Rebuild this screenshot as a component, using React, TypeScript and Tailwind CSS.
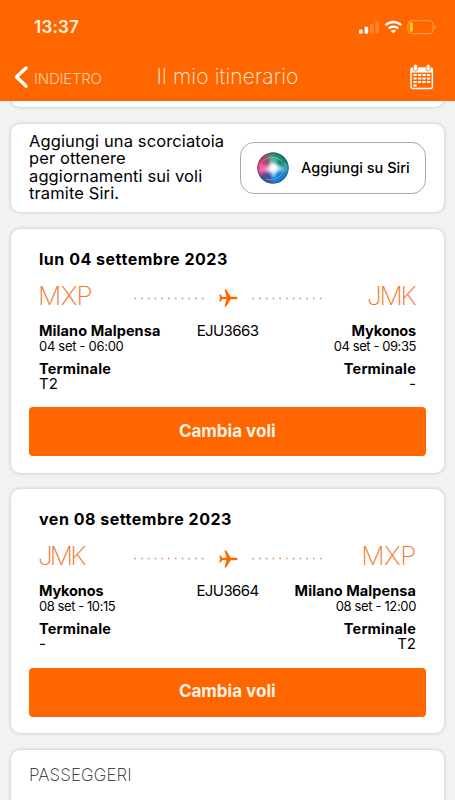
import React from "react";

type Stop = { code: string; codeClass: string; city: string; cityClass: string; time: string; timeClass: string; terminal: string };
type Flight = { date: string; number: string; from: Stop; to: Stop };

const flights: Flight[] = [
  {
    date: "lun 04 settembre 2023",
    number: "EJU3663",
    from: { code: "MXP", codeClass: "tracking-[-0.7px]", city: "Milano Malpensa", cityClass: "tracking-[0.07px]", time: "04 set - 06:00", timeClass: "tracking-[-0.3px]", terminal: "T2" },
    to: { code: "JMK", codeClass: "tracking-[-2.2px] pr-[1.5px]", city: "Mykonos", cityClass: "tracking-[-0.15px]", time: "04 set - 09:35", timeClass: "tracking-[-0.43px]", terminal: "-" },
  },
  {
    date: "ven 08 settembre 2023",
    number: "EJU3664",
    from: { code: "JMK", codeClass: "tracking-[-2.9px]", city: "Mykonos", cityClass: "tracking-[-0.15px]", time: "08 set - 10:15", timeClass: "tracking-[-0.43px]", terminal: "-" },
    to: { code: "MXP", codeClass: "tracking-[-0.4px]", city: "Milano Malpensa", cityClass: "tracking-[0.07px]", time: "08 set - 12:00", timeClass: "tracking-[-0.36px]", terminal: "T2" },
  },
];

function StatusIcons() {
  return (
    <svg width="80" height="18" viewBox="358 18 80 18" fill="none" aria-hidden="true">
      <rect x="359" y="29.5" width="3.6" height="4.3" rx="1" fill="#fff" />
      <rect x="364.6" y="26.8" width="3.6" height="7" rx="1" fill="#fff" />
      <rect x="370" y="24" width="3.6" height="9.8" rx="1" fill="#fff" opacity=".2" />
      <rect x="375.4" y="21.2" width="3.6" height="12.6" rx="1" fill="#fff" opacity=".2" />
      <g stroke="#fff" strokeWidth="2.3">
        <path d="M385.6 25.3c4.3-4.4 11.3-4.4 15.6 0" />
        <path d="M388.6 28.5c2.7-2.6 6.9-2.6 9.6 0" />
      </g>
      <path d="M390.7 30.7c1.6-1.4 3.8-1.4 5.4 0l-2.7 2.9z" fill="#fff" />
      <rect x="408" y="20.7" width="25" height="13" rx="3.4" stroke="#ffb27a" strokeOpacity=".75" />
      <rect x="409.8" y="22.6" width="3" height="9.2" rx="1.2" fill="#ffd60a" />
      <path d="M434.6 25v4.6c1.6-.8 1.6-3.8 0-4.6z" fill="#ffb27a" opacity=".8" />
    </svg>
  );
}

function CalendarIcon() {
  const cells = [
    [0, 0], [1, 0], [2, 0], [3, 0],
    [0, 1], [1, 1], [2, 1], [3, 1],
    [0, 2], [1, 2], [2, 2], [3, 2],
    [0, 3],
  ];
  return (
    <svg width="24" height="26" viewBox="0 0 24 26" fill="none" aria-hidden="true">
      <rect x="1" y="4" width="21.4" height="20.4" rx="2" stroke="#fff" strokeWidth="1.5" />
      <path d="M1 4h21.4v4.6H1z" fill="#fff" />
      <rect x="3.6" y="0.2" width="4" height="6.8" rx="2" fill="#fff" stroke="#ff6600" strokeWidth=".8" />
      <rect x="16.2" y="0.2" width="4" height="6.8" rx="2" fill="#fff" stroke="#ff6600" strokeWidth=".8" />
      {cells.map(([c, r]) => (
        <rect key={`${c}-${r}`} x={3.4 + c * 4.5} y={10 + r * 3.5} width="3.3" height="2" fill="#fff" />
      ))}
    </svg>
  );
}

function SiriOrb() {
  return (
    <svg width="32" height="32" viewBox="0 0 32 32" aria-hidden="true">
      <defs>
        <clipPath id="orb"><circle cx="16" cy="16" r="15.6" /></clipPath>
        <filter id="soft" x="-50%" y="-50%" width="200%" height="200%"><feGaussianBlur stdDeviation="1.8" /></filter>
        <filter id="glow" x="-50%" y="-50%" width="200%" height="200%"><feGaussianBlur stdDeviation="1.5" /></filter>
      </defs>
      <g clipPath="url(#orb)">
        <rect width="32" height="32" fill="#2c5a8a" />
        <g filter="url(#soft)">
          <path d="M16 16 8-2h26v16z" fill="#14876a" />
          <path d="M16 16 34 11v14z" fill="#3a9fb4" />
          <path d="M16 16 34 22 24 34 8 34z" fill="#127fd0" />
          <path d="M16 16 14 34 2 34 0 24z" fill="#45509e" />
          <path d="M16 16-2 25V6L9-2z" fill="#cc2a70" />
          <path d="M16 16 5 8 11 1l5 2z" fill="#7c5f6c" />
          <path d="M18 17 1 10v12z" fill="#f5609f" />
          <path d="M16 16 22 6 12 4z" fill="#4db698" />
        </g>
        <path d="M4 11C12 2 24 5 29 14M9 27c8 3 15-2 18-9" stroke="#9fe8e0" strokeWidth="1" opacity=".4" fill="none" />
        <path d="m14 9 5 3 8 5-7 3-3 6-4-5-6-4 5-3z" fill="#d5efff" opacity=".75" filter="url(#glow)" />
        <circle cx="16.5" cy="16" r="4" fill="#fff" filter="url(#glow)" />
        <circle cx="16" cy="16" r="15" fill="none" stroke="#503a68" strokeWidth="1.2" opacity=".5" />
      </g>
    </svg>
  );
}

function Dots() {
  return (
    <svg width="70" height="3" viewBox="0 0 70 3" aria-hidden="true">
      {Array.from({ length: 11 }, (_, i) => (
        <rect key={i} x={0.3 + i * 6.75} y="0.7" width="1.7" height="1.6" fill="#d99a72" />
      ))}
    </svg>
  );
}

function Plane() {
  return (
    <svg width="20" height="20" viewBox="0 0 20 20" fill="#ff6600" aria-hidden="true">
      <path d="M19.6 10c0 .8-1 1.2-2.3 1.2h-4.6L8.2 18.6H6.5l2-7.3-4.1-.2-1.8 2.3H1.200L2.100 10 1.200 6.600h1.400l1.800 2.300 4.100-.2-2-7.300h1.700l4.500 7.400h4.600c1.300 0 2.300.4 2.300 1.200z" />
    </svg>
  );
}

function StopInfo({ stop, right }: { stop: Stop; right?: boolean }) {
  return (
    <div className={right ? "flex flex-col items-end" : "flex flex-col items-start"}>
      <p className={`h-4 text-[14.5px] leading-4 font-bold whitespace-nowrap ${stop.cityClass}`}>{stop.city}</p>
      <p className={`h-[15px] text-[13px] leading-[14px] whitespace-nowrap ${stop.timeClass}`}>{stop.time}</p>
      <p className="mt-[7px] h-4 text-[14.5px] leading-4 font-bold tracking-[0.2px]">Terminale</p>
      <p className="h-4 text-[15px] leading-[14px]">{stop.terminal}</p>
    </div>
  );
}

function FlightCard({ flight }: { flight: Flight }) {
  return (
    <section className="h-[244px] shrink-0 rounded-[9px] bg-white pt-[19.9px] pr-[18px] pl-[17.5px] shadow-[0_0_3px_1px_#d4d4d4]">
      <div className="pr-[10px] pl-[10.5px]">
        <h2 className="h-5 text-[16px] leading-5 font-bold tracking-[0.52px]">{flight.date}</h2>
        <div className="mt-[15px] flex h-6 items-center justify-between text-[26px] leading-6 font-extralight text-[#f47a30]">
          <span className={`-ml-px w-24 ${flight.from.codeClass}`}>{flight.from.code}</span>
          <div className="flex flex-1 items-center justify-between pt-[5px]">
            <Dots /><Plane /><Dots />
          </div>
          <span className={`w-[94px] text-right ${flight.to.codeClass}`}>{flight.to.code}</span>
        </div>
        <div className="mt-[15px] grid grid-cols-[1fr_auto_1fr]">
          <StopInfo stop={flight.from} />
          <p className="text-[15px] leading-4 tracking-[-0.6px]">{flight.number}</p>
          <StopInfo stop={flight.to} right />
        </div>
      </div>
      <button className="mt-[14.5px] block h-[49px] w-full rounded-[4px] bg-[#ff6600] pb-[2px] text-[17px] leading-[46px] font-bold text-[#fff3e6]">Cambia voli</button>
    </section>
  );
}

export default function App() {
  return (
    <main className="flex h-[800px] w-[455px] flex-col overflow-hidden bg-[#f2f2f2] font-['Inter',sans-serif] text-black">
      <header className="z-10 flex h-[101px] shrink-0 flex-col bg-[#ff6600] text-[#fff1e0]">
        <div className="flex h-[54px] items-center justify-between pr-[17px] pl-[34px]">
          <time className="text-[17px] leading-5 font-semibold tracking-[0.2px]">13:37</time>
          <StatusIcons />
        </div>
        <div className="grid h-[46px] grid-cols-[142px_1fr_142px] items-center">
          <div className="flex items-center gap-[5px] pl-[13px]">
            <svg width="16" height="24" viewBox="0 0 16 24" fill="none" aria-hidden="true">
              <path d="M13 3 3.5 12 13 21" stroke="#fff" strokeWidth="3.4" strokeLinecap="round" strokeLinejoin="round" />
            </svg>
            <span className="pt-[4px] text-[15px] font-light tracking-[-0.2px] text-[#ffd0a2]">INDIETRO</span>
          </div>
          <h1 className="text-center text-[21px] font-extralight tracking-[0.15px] whitespace-nowrap">Il mio itinerario</h1>
          <div className="flex justify-end pr-[21px]"><CalendarIcon /></div>
        </div>
      </header>
      <div className="flex flex-col gap-[16.75px] px-[11px]">
        <section className="-mt-3 h-[18px] shrink-0 rounded-b-[9px] bg-white shadow-[0_0_3px_1px_#d4d4d4]" />
        <section className="flex h-[88.2px] shrink-0 items-center justify-between rounded-[9px] bg-white px-[18px] shadow-[0_0_3px_1px_#d4d4d4]">
          <p className="text-[16.5px] leading-[17.6px] tracking-[0.12px] whitespace-nowrap">
            Aggiungi una scorciatoia<br />per ottenere<br />aggiornamenti sui voli<br />tramite Siri.
          </p>
          <button className="flex h-[52px] w-[186px] items-center rounded-[14px] border border-[#aaa] pl-4">
            <SiriOrb />
            <span className="ml-3 text-[14.5px] font-medium whitespace-nowrap">Aggiungi su Siri</span>
          </button>
        </section>
        {flights.map((f) => <FlightCard key={f.number} flight={f} />)}
        <section className="h-[80px] shrink-0 rounded-[9px] bg-white px-[18px] pt-[15px] shadow-[0_0_3px_1px_#d4d4d4]">
          <h2 className="text-[17px] leading-5 font-extralight tracking-[0.1px] text-[#222]">PASSEGGERI</h2>
        </section>
      </div>
    </main>
  );
}
